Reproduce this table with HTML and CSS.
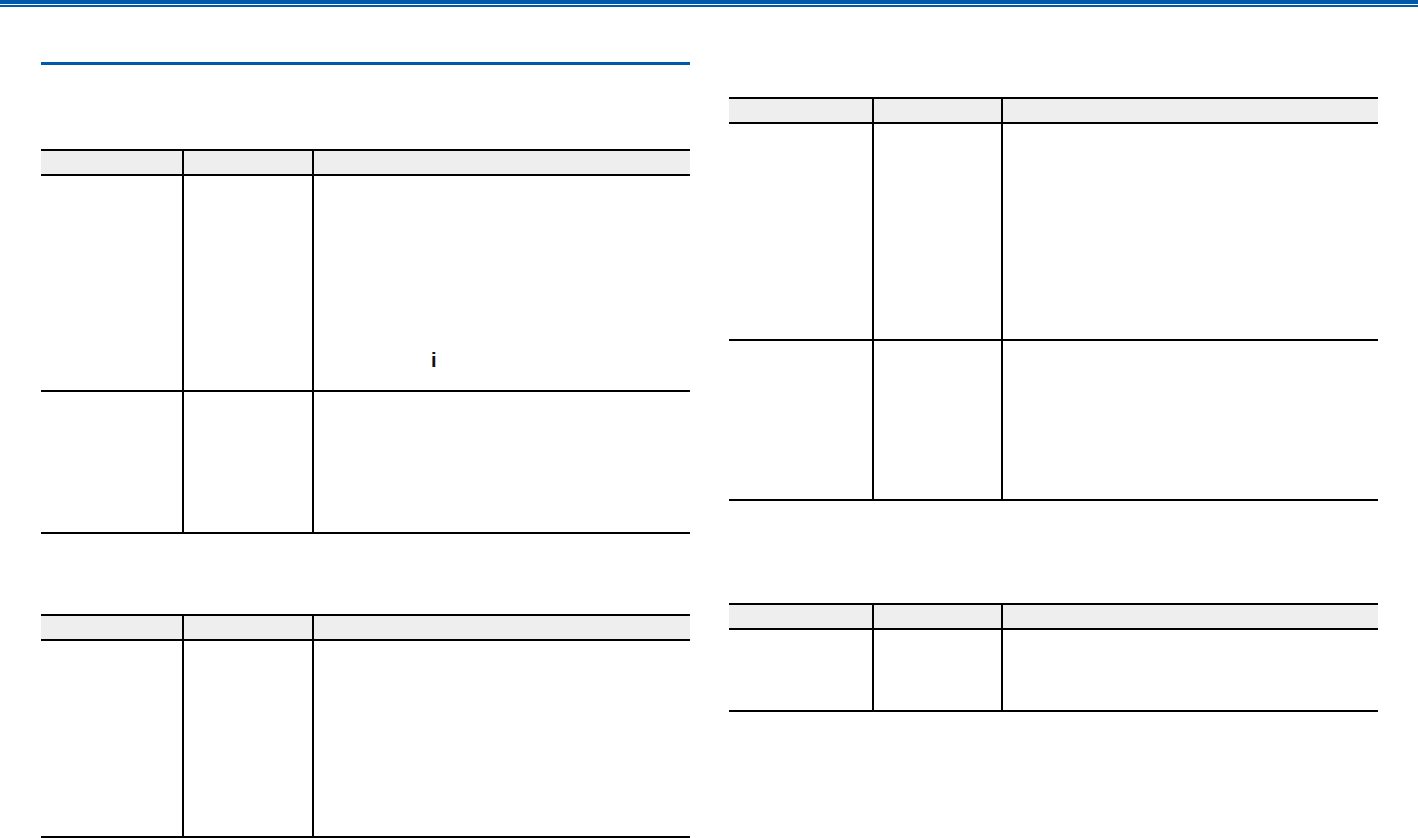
FILE: index.html
```html
<!DOCTYPE html>
<html>
<head>
<meta charset="utf-8">
<link rel="stylesheet" href="styles.css">
</head>
<body>
<div class="topbar"><div class="band"></div><div class="thin"></div></div>
<div class="page">
  <div class="col left">
    <div class="heading-line"></div>
    <div class="tbl t1">
      <div class="row head"><div class="c"></div><div class="c vl"></div><div class="c vl"></div></div>
      <div class="row r1a"><div class="c"></div><div class="c vl"></div><div class="c vl"><span class="icon-i">i</span></div></div>
      <div class="row r1b last"><div class="c"></div><div class="c vl"></div><div class="c vl"></div></div>
    </div>
    <div class="tbl t2">
      <div class="row head"><div class="c"></div><div class="c vl"></div><div class="c vl"></div></div>
      <div class="row r2a last"><div class="c"></div><div class="c vl"></div><div class="c vl"></div></div>
    </div>
  </div>
  <div class="col right">
    <div class="tbl t3">
      <div class="row head"><div class="c"></div><div class="c vl"></div><div class="c vl"></div></div>
      <div class="row r3a"><div class="c"></div><div class="c vl"></div><div class="c vl"></div></div>
      <div class="row r3b last"><div class="c"></div><div class="c vl"></div><div class="c vl"></div></div>
    </div>
    <div class="tbl t4">
      <div class="row head"><div class="c"></div><div class="c vl"></div><div class="c vl"></div></div>
      <div class="row r4a last"><div class="c"></div><div class="c vl"></div><div class="c vl"></div></div>
    </div>
  </div>
</div>
</body>
</html>
```
FILE: styles.css
```css
html, body {
  margin: 0;
  padding: 0;
  background: #ffffff;
  font-family: "Liberation Sans", Arial, sans-serif;
  overflow: hidden;
}
.topbar {
  display: flex;
  flex-direction: column;
}
.band {
  height: 4px;
  background: #0059a9;
}
.thin {
  height: 2px;
  margin-top: 1px;
  background: #0059a9;
}
.page {
  display: flex;
  gap: 39px;
  padding: 0 40px 0 41px;
}
.col {
  width: 649px;
  display: flex;
  flex-direction: column;
}
.heading-line {
  margin-top: 55px;
  height: 3px;
  background: #0059a9;
}
.tbl {
  border-top: 2px solid #000;
  border-bottom: 2px solid #000;
}
.row {
  display: grid;
  grid-template-columns: 141px 130px 1fr;
  border-bottom: 2px solid #000;
}
.right .row {
  grid-template-columns: 143px 129px 1fr;
}
.row.last {
  border-bottom: none;
}
.row.head {
  height: 23px;
  background: #eeeeee;
}
.vl {
  border-left: 2px solid #000;
}
.t1 { margin-top: 84px; }
.t2 { margin-top: 80px; }
.t3 { margin-top: 90px; }
.t4 { margin-top: 102px; }
.r1a { height: 214px; }
.r1b { height: 140px; }
.r2a { height: 195px; }
.r3a { height: 215px; }
.r3b { height: 158px; }
.r4a { height: 80px; }
.r1a .c:last-child {
  padding: 174px 0 0 117px;
}
.icon-i {
  display: block;
  font-size: 20px;
  line-height: 20px;
  font-weight: bold;
  color: #111;
}
```
